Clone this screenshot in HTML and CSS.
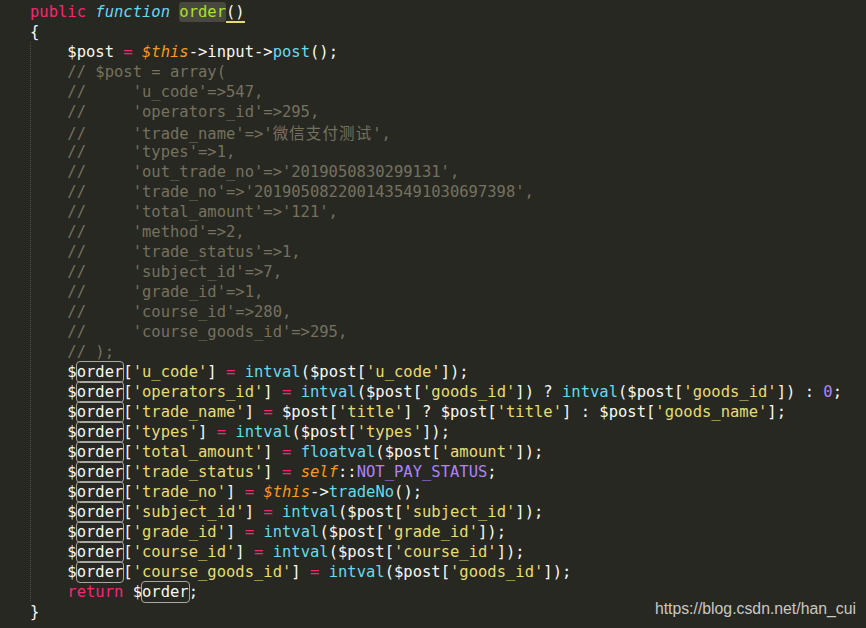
FILE: index.html
```html
<!DOCTYPE html>
<html lang="en">
<head>
    <meta charset="UTF-8">
    <title>order()</title>
    <link rel="stylesheet" href="styles.css">
</head>
<body>
    <div class="editor">
        <div class="code">
<div class="line"><span class="kw">public</span> <span class="fn-kw">function</span> <span class="name sel">order</span><span class="bracket">()</span></div>
<div class="line">{</div>
<div class="line guide">    $post <span class="kw">=</span> <span class="this">$this</span>-&gt;input-&gt;<span class="call">post</span>();</div>
<div class="line guide cm">    // $post = array(</div>
<div class="line guide cm">    //     'u_code'=&gt;547,</div>
<div class="line guide cm">    //     'operators_id'=&gt;295,</div>
<div class="line guide cm">    //     'trade_name'=&gt;'<span class="cjk">微信支付测试</span>',</div>
<div class="line guide cm">    //     'types'=&gt;1,</div>
<div class="line guide cm">    //     'out_trade_no'=&gt;'2019050830299131',</div>
<div class="line guide cm">    //     'trade_no'=&gt;'2019050822001435491030697398',</div>
<div class="line guide cm">    //     'total_amount'=&gt;'121',</div>
<div class="line guide cm">    //     'method'=&gt;2,</div>
<div class="line guide cm">    //     'trade_status'=&gt;1,</div>
<div class="line guide cm">    //     'subject_id'=&gt;7,</div>
<div class="line guide cm">    //     'grade_id'=&gt;1,</div>
<div class="line guide cm">    //     'course_id'=&gt;280,</div>
<div class="line guide cm">    //     'course_goods_id'=&gt;295,</div>
<div class="line guide cm">    // );</div>
<div class="line guide">    $<span class="match">order</span>[<span class="str">'u_code'</span>] <span class="kw">=</span> <span class="call">intval</span>($post[<span class="str">'u_code'</span>]);</div>
<div class="line guide">    $<span class="match">order</span>[<span class="str">'operators_id'</span>] <span class="kw">=</span> <span class="call">intval</span>($post[<span class="str">'goods_id'</span>]) ? <span class="call">intval</span>($post[<span class="str">'goods_id'</span>]) : <span class="num">0</span>;</div>
<div class="line guide">    $<span class="match">order</span>[<span class="str">'trade_name'</span>] <span class="kw">=</span> $post[<span class="str">'title'</span>] ? $post[<span class="str">'title'</span>] : $post[<span class="str">'goods_name'</span>];</div>
<div class="line guide">    $<span class="match">order</span>[<span class="str">'types'</span>] <span class="kw">=</span> <span class="call">intval</span>($post[<span class="str">'types'</span>]);</div>
<div class="line guide">    $<span class="match">order</span>[<span class="str">'total_amount'</span>] <span class="kw">=</span> <span class="call">floatval</span>($post[<span class="str">'amount'</span>]);</div>
<div class="line guide">    $<span class="match">order</span>[<span class="str">'trade_status'</span>] <span class="kw">=</span> <span class="this">self</span>::<span class="num">NOT_PAY_STATUS</span>;</div>
<div class="line guide">    $<span class="match">order</span>[<span class="str">'trade_no'</span>] <span class="kw">=</span> <span class="this">$this</span>-&gt;<span class="call">tradeNo</span>();</div>
<div class="line guide">    $<span class="match">order</span>[<span class="str">'subject_id'</span>] <span class="kw">=</span> <span class="call">intval</span>($post[<span class="str">'subject_id'</span>]);</div>
<div class="line guide">    $<span class="match">order</span>[<span class="str">'grade_id'</span>] <span class="kw">=</span> <span class="call">intval</span>($post[<span class="str">'grade_id'</span>]);</div>
<div class="line guide">    $<span class="match">order</span>[<span class="str">'course_id'</span>] <span class="kw">=</span> <span class="call">intval</span>($post[<span class="str">'course_id'</span>]);</div>
<div class="line guide">    $<span class="match">order</span>[<span class="str">'course_goods_id'</span>] <span class="kw">=</span> <span class="call">intval</span>($post[<span class="str">'goods_id'</span>]);</div>
<div class="line guide">    <span class="kw">return</span> $<span class="match">order</span>;</div>
<div class="line">}</div>
        </div>
        <div class="watermark">https://blog.csdn.net/han_cui</div>
    </div>
</body>
</html>
```

FILE: styles.css
```css
html, body {
    margin: 0;
    height: 100%;
    background-color: #272822;
}
.editor {
    position: relative;
    height: 628px;
    overflow: hidden;
    background-color: #272822;
}
.code {
    padding-top: 2px;
    font-family: "DejaVu Sans Mono", "Noto Sans CJK SC", monospace;
    font-size: 15.5px;
    line-height: 20px;
    color: #f8f8f2;
}
.line {
    height: 20px;
    padding-left: 30px;
    white-space: pre;
}
/* dotted indent guide at column 0 */
.guide {
    background-image: linear-gradient(#4f4f45 50%, transparent 50%);
    background-size: 1px 2px;
    background-repeat: repeat-y;
    background-position: 30px 0;
}
.kw { color: #f92672; }
.fn-kw { color: #66d9ef; font-style: italic; }
.name { color: #a6e22e; }
.sel {
    background-color: #49483e;
    border-radius: 3px;
    padding: 1px 0;
}
.bracket {
    border-bottom: 2px solid #e6db74;
}
.this { color: #fd971f; font-style: italic; }
.call { color: #66d9ef; }
.cm { color: #75715e; }
.cjk {
    font-family: "Noto Sans CJK SC", sans-serif;
    letter-spacing: 1.1px;
}
.str { color: #e6db74; }
.num { color: #ae81ff; }
.match {
    outline: 1px solid #a8a8a0;
    border-radius: 3px;
    padding: 1px 0;
}
.watermark {
    position: absolute;
    right: 10px;
    bottom: 10px;
    font-family: "Liberation Sans", Arial, sans-serif;
    font-size: 15.8px;
    color: #c8c8c4;
}
```
